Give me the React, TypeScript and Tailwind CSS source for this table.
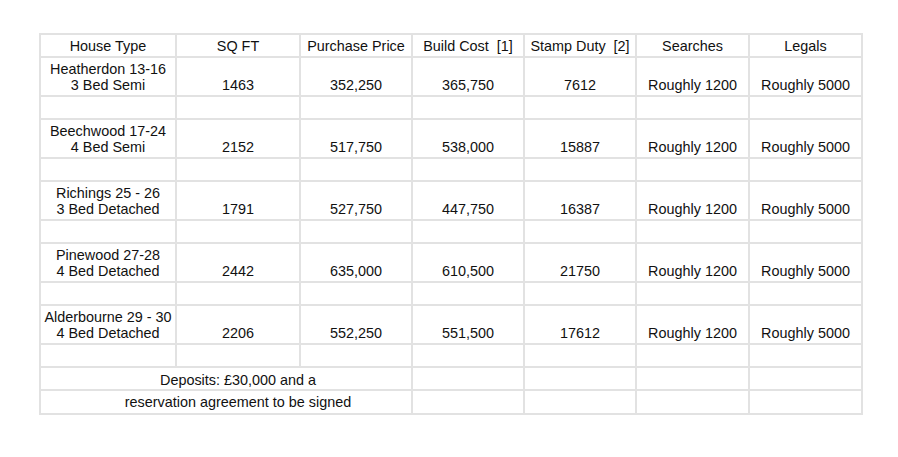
const rows = [
  { name: "Heatherdon 13-16", type: "3 Bed Semi", sq: "1463", price: "352,250", build: "365,750", duty: "7612" },
  { name: "Beechwood 17-24", type: "4 Bed Semi", sq: "2152", price: "517,750", build: "538,000", duty: "15887" },
  { name: "Richings 25 - 26", type: "3 Bed Detached", sq: "1791", price: "527,750", build: "447,750", duty: "16387" },
  { name: "Pinewood 27-28", type: "4 Bed Detached", sq: "2442", price: "635,000", build: "610,500", duty: "21750" },
  { name: "Alderbourne 29 - 30", type: "4 Bed Detached", sq: "2206", price: "552,250", build: "551,500", duty: "17612" },
];

const headers = ["House Type", "SQ FT", "Purchase Price", "Build Cost  [1]", "Stamp Duty  [2]", "Searches", "Legals"];
const widths = [136, 124, 112, 112, 112, 113, 113];

const cell = "border-2 border-[#e2e2e2] text-center p-0";

export default function App() {
  return (
    <div className="w-[898px] h-[457px] bg-white text-[#111] text-[14.4px] leading-[16px] pt-[33px] pl-[39px]" style={{ fontFamily: '"Liberation Sans", Arial, sans-serif' }}>
      <table className="table-fixed border-collapse w-[823px]">
        <colgroup>
          {widths.map((w, i) => (
            <col key={i} style={{ width: w }} />
          ))}
        </colgroup>
        <tbody>
          <tr className="h-[23px]">
            {headers.map((h) => (
              <td key={h} className={cell + " whitespace-pre align-middle"}>{h}</td>
            ))}
          </tr>
          {rows.map((r) => (
            <>
              <tr key={r.name} className="h-[39px]">
                <td className={cell + " align-bottom pb-[2px]"}>
                  {r.name}
                  <br />
                  {r.type}
                </td>
                <td className={cell + " align-bottom pb-[2px]"}>{r.sq}</td>
                <td className={cell + " align-bottom pb-[2px]"}>{r.price}</td>
                <td className={cell + " align-bottom pb-[2px]"}>{r.build}</td>
                <td className={cell + " align-bottom pb-[2px]"}>{r.duty}</td>
                <td className={cell + " align-bottom pb-[2px]"}>Roughly 1200</td>
                <td className={cell + " align-bottom pb-[2px]"}>Roughly 5000</td>
              </tr>
              <tr key={r.name + "-gap"} className="h-[23px]">
                {widths.map((_, i) => (
                  <td key={i} className={cell}></td>
                ))}
              </tr>
            </>
          ))}
          <tr className="h-[23px]">
            <td colSpan={3} className={cell + " pl-[24px] pt-[2px] align-middle"}>Deposits: £30,000 and a</td>
            <td className={cell}></td>
            <td className={cell}></td>
            <td className={cell}></td>
            <td className={cell}></td>
          </tr>
          <tr className="h-[24px]">
            <td colSpan={3} className={cell + " pl-[24px] align-middle"}>reservation agreement to be signed</td>
            <td className={cell}></td>
            <td className={cell}></td>
            <td className={cell}></td>
            <td className={cell}></td>
          </tr>
        </tbody>
      </table>
    </div>
  );
}
